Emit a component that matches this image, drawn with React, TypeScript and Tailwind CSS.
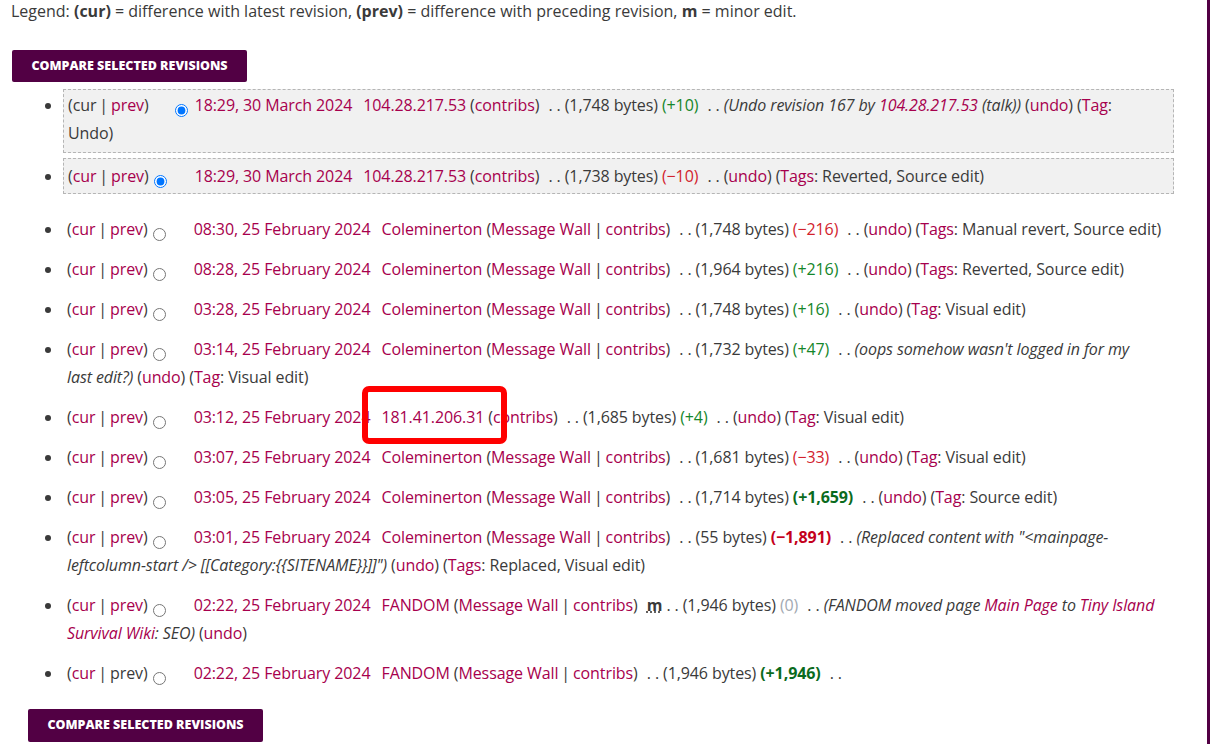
import type { ReactNode } from "react";

function A({ children, className = "" }: { children: ReactNode; className?: string }) {
  return <span className={`text-[#a7004d] ${className}`}>{children}</span>;
}

function Bar() {
  return <span className="mx-[3px]">|</span>;
}

function Sep() {
  return <span className="ml-[5px]">. .</span>;
}

function Radio({ mode, name }: { mode: "hidden" | "on" | "off"; name: string }) {
  return (
    <input
      type="radio"
      name={name}
      defaultChecked={mode === "on"}
      className={`m-[3px_3px_0_5px] h-[13px] w-[13px] align-[-6px] ${mode === "hidden" ? "invisible" : ""}`}
    />
  );
}

function CurPrev({ cur = true, prev = true }: { cur?: boolean; prev?: boolean }) {
  return (
    <>
      ({cur ? <A>cur</A> : "cur"}
      <Bar />
      {prev ? <A>prev</A> : "prev"})
    </>
  );
}

function User({ name, wall = true }: { name: string; wall?: boolean }) {
  return (
    <>
      <A className="ml-[11px]">{name}</A> (
      {wall && (
        <>
          <A>Message Wall</A>
          <Bar />
        </>
      )}
      <A>contribs</A>)
    </>
  );
}

function Undo() {
  return (
    <>
      (<A>undo</A>)
    </>
  );
}

function Tags({ label, children }: { label: string; children: ReactNode }) {
  return (
    <>
      (<A>{label}</A>: {children})
    </>
  );
}

const green = "text-[#14862a]";
const red = "text-[#d2222d]";

export default function App() {
  return (
    <div className="relative flex min-h-[744px] w-full bg-white font-['Open_Sans',sans-serif] text-[16px] tracking-[-0.1px] text-[#3a3a3a]">
      <div className="w-[1207px] pl-[12px] pr-[33px]">
        <p className="ml-[-1px] leading-[22px] tracking-normal">
          Legend: <b>(cur)</b> = difference with latest revision, <b>(prev)</b> = difference with preceding revision,{" "}
          <b>m</b> = minor edit.
        </p>

        <button className="mt-[28px] flex h-[32px] w-[235px] items-center justify-center rounded-[2px] bg-[#520044] text-[12.5px] font-extrabold uppercase tracking-normal text-white">
          Compare selected revisions
        </button>

        <ul className="list-disc pl-[51px] leading-[28px]">
          <li className="mt-[7px] border border-dashed border-[#b5b5b5] bg-[#f1f1f1] pb-[5px] pl-[4px] pt-[1px]">
            <CurPrev cur={false} />
            <Radio name="oldid" mode="hidden" />
            <Radio name="diff" mode="on" /> <A>18:29, 30 March 2024</A>
            <User name="104.28.217.53" wall={false} /> <Sep /> (1,748 bytes) <span className={green}>(+10)</span> <Sep />{" "}
            <i>
              (Undo revision 167 by <A>104.28.217.53</A> (talk))
            </i>{" "}
            <Undo /> (<A>Tag</A>:
            <br />
            Undo)
          </li>

          <li className="mt-[5px] border border-dashed border-[#b5b5b5] bg-[#f1f1f1] pb-[3px] pl-[4px] pt-[3px]">
            <CurPrev />
            <Radio name="oldid" mode="on" />
            <Radio name="diff" mode="hidden" /> <A>18:29, 30 March 2024</A>
            <User name="104.28.217.53" wall={false} /> <Sep /> (1,738 bytes) <span className={red}>(−10)</span> <Sep />{" "}
            <Undo /> <Tags label="Tags">Reverted, Source edit</Tags>
          </li>

          <li className="mt-[21px] pl-[4px]">
            <CurPrev />
            <Radio name="oldid" mode="off" />
            <Radio name="diff" mode="hidden" /> <A>08:30, 25 February 2024</A>
            <User name="Coleminerton" /> <Sep /> (1,748 bytes) <span className={red}>(−216)</span> <Sep /> <Undo />{" "}
            <Tags label="Tags">Manual revert, Source edit</Tags>
          </li>

          <li className="mt-[12px] pl-[4px]">
            <CurPrev />
            <Radio name="oldid" mode="off" />
            <Radio name="diff" mode="hidden" /> <A>08:28, 25 February 2024</A>
            <User name="Coleminerton" /> <Sep /> (1,964 bytes) <span className={green}>(+216)</span> <Sep /> <Undo />{" "}
            <Tags label="Tags">Reverted, Source edit</Tags>
          </li>

          <li className="mt-[12px] pl-[4px]">
            <CurPrev />
            <Radio name="oldid" mode="off" />
            <Radio name="diff" mode="hidden" /> <A>03:28, 25 February 2024</A>
            <User name="Coleminerton" /> <Sep /> (1,748 bytes) <span className={green}>(+16)</span> <Sep /> <Undo />{" "}
            <Tags label="Tag">Visual edit</Tags>
          </li>

          <li className="mt-[12px] pl-[4px]">
            <CurPrev />
            <Radio name="oldid" mode="off" />
            <Radio name="diff" mode="hidden" /> <A>03:14, 25 February 2024</A>
            <User name="Coleminerton" /> <Sep /> (1,732 bytes) <span className={green}>(+47)</span> <Sep />{" "}
            <i>
              (oops somehow wasn't logged in for my
              <br />
              last edit?)
            </i>{" "}
            <Undo /> <Tags label="Tag">Visual edit</Tags>
          </li>

          <li className="mt-[12px] pl-[4px]">
            <CurPrev />
            <Radio name="oldid" mode="off" />
            <Radio name="diff" mode="hidden" /> <A>03:12, 25 February 2024</A>
            <User name="181.41.206.31" wall={false} /> <Sep /> (1,685 bytes) <span className={green}>(+4)</span> <Sep />{" "}
            <Undo /> <Tags label="Tag">Visual edit</Tags>
          </li>

          <li className="mt-[12px] pl-[4px]">
            <CurPrev />
            <Radio name="oldid" mode="off" />
            <Radio name="diff" mode="hidden" /> <A>03:07, 25 February 2024</A>
            <User name="Coleminerton" /> <Sep /> (1,681 bytes) <span className={red}>(−33)</span> <Sep /> <Undo />{" "}
            <Tags label="Tag">Visual edit</Tags>
          </li>

          <li className="mt-[12px] pl-[4px]">
            <CurPrev />
            <Radio name="oldid" mode="off" />
            <Radio name="diff" mode="hidden" /> <A>03:05, 25 February 2024</A>
            <User name="Coleminerton" /> <Sep /> (1,714 bytes){" "}
            <b className="text-[#0a6b1d]">(+1,659)</b> <Sep /> <Undo /> <Tags label="Tag">Source edit</Tags>
          </li>

          <li className="mt-[12px] pl-[4px]">
            <CurPrev />
            <Radio name="oldid" mode="off" />
            <Radio name="diff" mode="hidden" /> <A>03:01, 25 February 2024</A>
            <User name="Coleminerton" /> <Sep /> (55 bytes) <b className="text-[#c4001c]">(−1,891)</b> <Sep />{" "}
            <i>
              (Replaced content with "&lt;mainpage-
              <br />
              leftcolumn-start /&gt; [[Category:{"{{"}SITENAME{"}}"}]]")
            </i>{" "}
            <Undo /> <Tags label="Tags">Replaced, Visual edit</Tags>
          </li>

          <li className="mt-[12px] pl-[4px]">
            <CurPrev />
            <Radio name="oldid" mode="off" />
            <Radio name="diff" mode="hidden" /> <A>02:22, 25 February 2024</A>
            <User name="FANDOM" />{" "}
            <abbr className="ml-[5px] font-bold [text-decoration-line:underline] [text-decoration-style:dotted]">m</abbr>{" "}
            <span>. .</span> (1,946 bytes) <span className="text-[#a2a9b1]">(0)</span> <Sep />{" "}
            <i>
              (FANDOM moved page <A>Main Page</A> to <A>Tiny Island</A>
              <br />
              <A>Survival Wiki</A>: SEO)
            </i>{" "}
            <Undo />
          </li>

          <li className="mt-[12px] pl-[4px]">
            <CurPrev prev={false} />
            <Radio name="oldid" mode="off" />
            <Radio name="diff" mode="hidden" /> <A>02:22, 25 February 2024</A>
            <User name="FANDOM" /> <Sep /> (1,946 bytes) <b className="text-[#0a6b1d]">(+1,946)</b> <Sep />
          </li>
        </ul>

        <button className="ml-[16px] mt-[22px] flex h-[33px] w-[235px] items-center justify-center rounded-[2px] bg-[#520044] text-[12.5px] font-extrabold uppercase tracking-normal text-white">
          Compare selected revisions
        </button>
      </div>

      <div className="w-[3px] shrink-0 bg-[#520044]" />

      {/* highlight drawn over the 03:12 row */}
      <div className="pointer-events-none absolute left-[362px] top-[386px] h-[58px] w-[145px] rounded-[7px] border-[6px] border-[#ff0000]" />
    </div>
  );
}
